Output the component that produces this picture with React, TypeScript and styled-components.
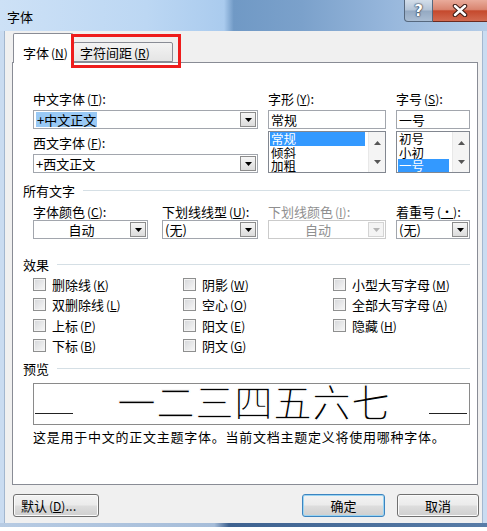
import React from 'react'
import styled, { createGlobalStyle } from 'styled-components'

const GlobalStyle = createGlobalStyle`
  html, body {
    margin: 0;
    padding: 0;
    background: #fff;
  }
  body {
    font-family: "Noto Sans CJK SC", "Noto Sans", sans-serif;
    font-size: 13px;
    color: #000;
  }
`

const Window = styled.div`
  position: relative;
  width: 487px;
  display: flex;
  flex-direction: column;
`

const TitleBar = styled.div`
  height: 31px;
  display: flex;
  justify-content: space-between;
  align-items: flex-start;
  background: linear-gradient(90deg, #cde1f6 0%, #bcd7f3 30%, #aacbee 46%, #7099c5 48%, #7ba1cb 62%, #97b7dc 80%, #b4cce7 100%);
`

const Title = styled.div`
  padding: 8px 0 0 7px;
  line-height: 18px;
  font-size: 13px;
`

const CaptionButtons = styled.div`
  display: flex;
`

const HelpButton = styled.div`
  width: 29px;
  height: 22px;
  box-sizing: border-box;
  border: 1px solid #56687e;
  border-top: none;
  border-radius: 0 0 0 4px;
  background: linear-gradient(#d3deea 0%, #b3c3d6 48%, #94a9c2 52%, #aabdd3 100%);
  display: flex;
  justify-content: center;
  align-items: center;
  color: #fff;
  font: bold 15px "DejaVu Sans", sans-serif;
  text-shadow: 0 0 1px #2b3a4e, 0 0 1px #2b3a4e, 0 0 2px #2b3a4e;
`

const CloseButton = styled.div`
  width: 54px;
  height: 22px;
  box-sizing: border-box;
  border-bottom: 1px solid #6b2a20;
  background: linear-gradient(#e9ab9b 0%, #d98570 45%, #c5492d 52%, #d26a50 100%);
  display: flex;
  justify-content: center;
  align-items: center;
`

const Frame = styled.div`
  background: #f0f0f0;
  border-left: 4px solid #cadcf1;
  border-right: 4px solid #cadcf1;
  box-shadow: inset 1px 0 0 #a3b7cf, inset -1px 0 0 #a3b7cf;
  padding: 2px 5px 6px 8px;
`

const FrameBottom = styled.div`
  height: 4px;
  background: linear-gradient(90deg, #b7cbe3 0%, #a6bdd9 44%, #3e6290 47%, #587ca7 100%);
`

const TabStrip = styled.div`
  height: 29px;
  display: flex;
  align-items: flex-end;
  padding-left: 1px;
`

const Tab = styled.div<{ $active?: boolean }>`
  box-sizing: border-box;
  height: ${p => (p.$active ? '30px' : '20px')};
  width: ${p => (p.$active ? '60px' : '100px')};
  margin-bottom: ${p => (p.$active ? '-1px' : '0')};
  position: relative;
  z-index: ${p => (p.$active ? 1 : 0)};
  border: 1px solid #898c95;
  border-bottom: ${p => (p.$active ? 'none' : '1px solid #898c95')};
  border-radius: 2px 2px 0 0;
  background: ${p => (p.$active ? '#fff' : 'linear-gradient(#f3f3f3, #e5e5e5)')};
  padding: ${p => (p.$active ? '11px 0 0 9px' : '2px 0 0 6px')};
  line-height: 16px;
  white-space: nowrap;
`

const Annotation = styled.div`
  position: absolute;
  left: 71px;
  top: 34px;
  width: 110px;
  height: 34px;
  box-sizing: border-box;
  border: 3px solid #ee1c1c;
  z-index: 5;
`

const Panel = styled.div`
  width: 466px;
  height: 423px;
  box-sizing: border-box;
  border: 1px solid #898c95;
  background: #fff;
  padding: 0 7px 0 10px;
`

const Access = styled.span`
  margin-left: 2px;
  font-size: 12px;
  & u {
    text-decoration: underline;
    text-underline-offset: 1px;
  }
`

const Key = ({ k }: { k: string }) => (
  <Access>
    (<u>{k}</u>)
  </Access>
)

const TopGrid = styled.div`
  margin: 27px 0 0 10px;
  display: grid;
  grid-template-columns: 225px 118px 74px;
  column-gap: 10px;
`

const Column = styled.div`
  display: flex;
  flex-direction: column;
`

const Label = styled.div<{ $before?: number; $after?: number; $disabled?: boolean }>`
  height: 17px;
  line-height: 17px;
  margin-top: ${p => p.$before ?? 0}px;
  margin-bottom: ${p => p.$after ?? 3}px;
  color: ${p => (p.$disabled ? '#8f8f8f' : '#000')};
  white-space: nowrap;
`

const ComboBox = styled.div<{ $disabled?: boolean; $width?: number }>`
  display: flex;
  height: 19px;
  width: ${p => (p.$width ? `${p.$width}px` : 'auto')};
  box-sizing: border-box;
  border: 1px solid ${p => (p.$disabled ? '#cbcbcb' : '#a2a6ad')};
  background: #fff;
`

const ComboText = styled.div<{ $center?: boolean; $disabled?: boolean }>`
  flex: 1;
  display: flex;
  align-items: center;
  justify-content: ${p => (p.$center ? 'center' : 'flex-start')};
  padding-left: ${p => (p.$center ? '0' : '2px')};
  color: ${p => (p.$disabled ? '#8f8f8f' : '#000')};
  line-height: 15px;
  white-space: nowrap;
  overflow: hidden;
`

const Selection = styled.span`
  background: #99c9f5;
  padding: 0 1px;
`

const DropButton = styled.div<{ $disabled?: boolean }>`
  width: 16px;
  margin: 1px;
  box-sizing: border-box;
  border: 1px solid ${p => (p.$disabled ? '#d4d4d4' : '#8c8c8c')};
  background: ${p => (p.$disabled ? '#f4f4f4' : 'linear-gradient(#f6f6f6, #dcdcdc)')};
  display: flex;
  justify-content: center;
  align-items: center;
`

const Arrow = ({ color = '#000', up = false }: { color?: string; up?: boolean }) => (
  <svg width="7" height="4" viewBox="0 0 7 4">
    <polygon points={up ? '0,4 7,4 3.5,0' : '0,0 7,0 3.5,4'} fill={color} />
  </svg>
)

const TextInput = styled.div`
  height: 19px;
  box-sizing: border-box;
  border: 1px solid #a2a6ad;
  padding-left: 2px;
  line-height: 17px;
  background: #fff;
`

const ListBox = styled.div`
  display: flex;
  height: 42px;
  margin-top: 2px;
  box-sizing: border-box;
  border: 1px solid #828790;
  background: #fff;
  overflow: hidden;
`

const ListItems = styled.div`
  flex: 1;
  padding: 0 3px 0 1px;
`

const ListItem = styled.div<{ $selected?: boolean }>`
  height: 13.5px;
  line-height: 13.5px;
  font-size: 12.5px;
  padding-left: 1px;
  background: ${p => (p.$selected ? '#3399ff' : 'transparent')};
  color: ${p => (p.$selected ? '#fff' : '#000')};
  overflow: hidden;
`

const ScrollBar = styled.div`
  width: 17px;
  background: #f4f4f4;
  border-left: 1px solid #e8e8e8;
  display: flex;
  flex-direction: column;
  justify-content: space-between;
  align-items: center;
  padding: 9px 0 8px;
  box-sizing: border-box;
`

const Section = styled.div<{ $top: number }>`
  display: flex;
  align-items: center;
  gap: 8px;
  margin-top: ${p => p.$top}px;
  height: 17px;
  line-height: 17px;
  &::after {
    content: '';
    flex: 1;
    height: 1px;
    background: #d5dfe5;
  }
`

const SecondGrid = styled.div`
  margin: 4px 0 0 10px;
  display: grid;
  grid-template-columns: 119px 96px 118px 74px;
  column-gap: 10px;
`

const CheckGrid = styled.div`
  margin: 1px 0 0 10px;
  display: grid;
  grid-template-columns: 150px 150px 1fr;
  grid-template-rows: repeat(4, 20.5px);
  grid-auto-flow: column;
`

const CheckItem = styled.label`
  display: flex;
  align-items: center;
  gap: 6px;
  white-space: nowrap;
`

const CheckBox = styled.span`
  width: 13px;
  height: 13px;
  box-sizing: border-box;
  border: 1px solid #8e8f8f;
  background: linear-gradient(135deg, #d4d6d9 0%, #f8f8f8 100%);
  box-shadow: inset 0 0 0 1px #f3f3f3;
`

const PreviewBox = styled.div`
  margin: 6px 0 0 10px;
  height: 42px;
  box-sizing: border-box;
  border: 1px solid #8a8a8a;
  display: flex;
  align-items: flex-end;
  padding: 0 2px 10px 1px;
`

const Rule = styled.div<{ $push?: boolean }>`
  width: 38px;
  height: 1px;
  background: #222;
  margin-left: ${p => (p.$push ? 'auto' : '0')};
`

const PreviewText = styled.div`
  margin: 0 0 -6px 44px;
  font-size: 39px;
  line-height: 40px;
  color: #000;
  -webkit-text-stroke: 1.3px #fff;
  paint-order: fill stroke;
  white-space: nowrap;
`

const Description = styled.div`
  margin: 3px 0 0 10px;
  line-height: 17px;
  letter-spacing: 0.75px;
  white-space: nowrap;
`

const ButtonRow = styled.div`
  display: flex;
  margin: 9px -1px 0 1px;
  gap: 12px;
`

const Button = styled.div<{ $primary?: boolean; $width: number; $left?: boolean }>`
  width: ${p => p.$width}px;
  height: 23px;
  box-sizing: border-box;
  border: 1px solid ${p => (p.$primary ? '#3c84c0' : '#707070')};
  border-radius: 3px;
  background: linear-gradient(#f3f3f3 0%, #ebebeb 48%, #dddddd 52%, #cfcfcf 100%);
  box-shadow: inset 0 0 0 1px ${p => (p.$primary ? '#9ad4f2' : '#fbfbfb')};
  line-height: 21px;
  text-align: ${p => (p.$left ? 'left' : 'center')};
  padding-left: ${p => (p.$left ? '7px' : '0')};
  white-space: nowrap;
`

const Spacer = styled.div`
  flex: 1;
`

const topFonts = [
  { label: '中文字体', key: 'T', value: '+中文正文', selected: true },
  { label: '西文字体', key: 'F', value: '+西文正文', selected: false },
]

const styles = ['常规', '倾斜', '加粗']
const sizes = ['初号', '小初', '一号']

const effects = [
  ['删除线', 'K'],
  ['双删除线', 'L'],
  ['上标', 'P'],
  ['下标', 'B'],
  ['阴影', 'W'],
  ['空心', 'O'],
  ['阳文', 'E'],
  ['阴文', 'G'],
  ['小型大写字母', 'M'],
  ['全部大写字母', 'A'],
  ['隐藏', 'H'],
]

export default function App() {
  return (
    <>
      <GlobalStyle />
      <Window>
        <TitleBar>
          <Title>字体</Title>
          <CaptionButtons>
            <HelpButton>?</HelpButton>
            <CloseButton>
              <svg width="16" height="13" viewBox="0 0 16 13">
                <path d="M3 2 L13 11 M13 2 L3 11" stroke="#3b1a14" strokeWidth="4.5" strokeLinecap="round" />
                <path d="M3 2 L13 11 M13 2 L3 11" stroke="#fff" strokeWidth="2.5" strokeLinecap="round" />
              </svg>
            </CloseButton>
          </CaptionButtons>
        </TitleBar>
        <Frame>
          <TabStrip>
            <Tab $active>
              字体<Key k="N" />
            </Tab>
            <Tab>
              字符间距<Key k="R" />
            </Tab>
          </TabStrip>
          <Panel>
            <TopGrid>
              <Column>
                {topFonts.map((f, i) => (
                  <React.Fragment key={f.key}>
                    <Label $before={i === 0 ? 0 : 5}>
                      {f.label}
                      <Key k={f.key} />:
                    </Label>
                    <ComboBox>
                      <ComboText>{f.selected ? <Selection>{f.value}</Selection> : f.value}</ComboText>
                      <DropButton>
                        <Arrow />
                      </DropButton>
                    </ComboBox>
                  </React.Fragment>
                ))}
              </Column>
              <Column>
                <Label>
                  字形<Key k="Y" />:
                </Label>
                <TextInput>常规</TextInput>
                <ListBox>
                  <ListItems>
                    {styles.map(s => (
                      <ListItem key={s} $selected={s === '常规'}>
                        {s}
                      </ListItem>
                    ))}
                  </ListItems>
                  <ScrollBar>
                    <Arrow up color="#555" />
                    <Arrow color="#555" />
                  </ScrollBar>
                </ListBox>
              </Column>
              <Column>
                <Label>
                  字号<Key k="S" />:
                </Label>
                <TextInput>一号</TextInput>
                <ListBox>
                  <ListItems>
                    {sizes.map(s => (
                      <ListItem key={s} $selected={s === '一号'}>
                        {s}
                      </ListItem>
                    ))}
                  </ListItems>
                  <ScrollBar>
                    <Arrow up color="#555" />
                    <Arrow color="#555" />
                  </ScrollBar>
                </ListBox>
              </Column>
            </TopGrid>

            <Section $top={9}>所有文字</Section>
            <SecondGrid>
              <Column>
                <Label $after={0}>
                  字体颜色<Key k="C" />:
                </Label>
                <ComboBox $width={115}>
                  <ComboText $center>自动</ComboText>
                  <DropButton>
                    <Arrow />
                  </DropButton>
                </ComboBox>
              </Column>
              <Column>
                <Label $after={0}>
                  下划线线型<Key k="U" />:
                </Label>
                <ComboBox>
                  <ComboText>(无)</ComboText>
                  <DropButton>
                    <Arrow />
                  </DropButton>
                </ComboBox>
              </Column>
              <Column>
                <Label $after={0} $disabled>
                  下划线颜色<Key k="I" />:
                </Label>
                <ComboBox $disabled>
                  <ComboText $center $disabled>
                    自动
                  </ComboText>
                  <DropButton $disabled>
                    <Arrow color="#b5b5b5" />
                  </DropButton>
                </ComboBox>
              </Column>
              <Column>
                <Label $after={0}>
                  着重号<Key k="·" />:
                </Label>
                <ComboBox>
                  <ComboText>(无)</ComboText>
                  <DropButton>
                    <Arrow />
                  </DropButton>
                </ComboBox>
              </Column>
            </SecondGrid>

            <Section $top={17}>效果</Section>
            <CheckGrid>
              {effects.map(([name, k]) => (
                <CheckItem key={k}>
                  <CheckBox />
                  <span>
                    {name}
                    <Key k={k} />
                  </span>
                </CheckItem>
              ))}
            </CheckGrid>

            <Section $top={4}>预览</Section>
            <PreviewBox>
              <Rule />
              <PreviewText>一二三四五六七</PreviewText>
              <Rule $push />
            </PreviewBox>
            <Description>这是用于中文的正文主题字体。当前文档主题定义将使用哪种字体。</Description>
          </Panel>
          <ButtonRow>
            <Button $width={86} $left>
              默认<Key k="D" />...
            </Button>
            <Spacer />
            <Button $width={83} $primary>
              确定
            </Button>
            <Button $width={82}>取消</Button>
          </ButtonRow>
        </Frame>
        <FrameBottom />
        <Annotation />
      </Window>
    </>
  )
}
